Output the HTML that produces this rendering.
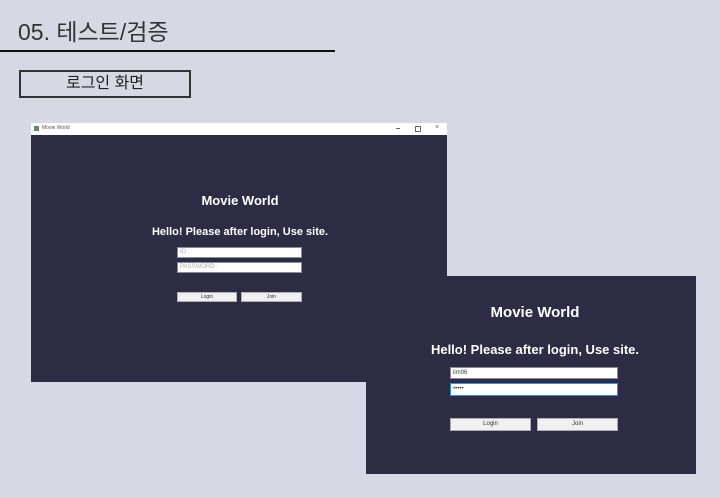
<!DOCTYPE html>
<html><head><meta charset="utf-8"><style>
body{margin:0;width:720px;height:498px;background:#d6d8e3;position:relative;overflow:hidden;font-family:"Liberation Sans","Noto Sans CJK KR",sans-serif}
.a{position:absolute}
.dark{background:#2e2b45}
.w{color:#fff;font-weight:bold;text-align:center;white-space:nowrap}
.in{background:#fff;border:1px solid #8a8a9a;box-sizing:border-box;font-size:6px;color:#aaa;padding-left:2px;line-height:9px}
.bt{background:#f0f0f0;border:1px solid #adadad;box-sizing:border-box;text-align:center;color:#333}
</style></head><body>
<div class="a" style="left:18px;top:13px;font-size:23px;color:#333">05. 테스트/검증</div>
<div class="a" style="left:0;top:50px;width:335px;height:2px;background:#111"></div>
<div class="a" style="left:19px;top:70px;width:172px;height:28px;border:2px solid #333;box-sizing:border-box;text-align:center;font-size:16px;line-height:24px;color:#222">로그인 화면</div>

<div class="a" style="left:31px;top:123px;width:416px;height:12px;background:#fff"></div>
<div class="a" style="left:34px;top:126px;width:5px;height:5px;background:#5a8a6a"></div>
<div class="a" style="left:42px;top:125px;font-size:5px;color:#555">Movie World</div>
<div class="a" style="left:396px;top:128px;width:4px;height:1px;background:#666"></div>
<div class="a" style="left:415px;top:126px;width:4px;height:4px;border:1px solid #666"></div>
<div class="a" style="left:435px;top:124px;font-size:7px;color:#666;line-height:8px">×</div>
<div class="a dark" style="left:31px;top:135px;width:416px;height:247px"></div>
<div class="a w" style="left:140px;top:193px;width:200px;font-size:13px">Movie World</div>
<div class="a w" style="left:130px;top:226px;width:220px;font-size:11px">Hello! Please after login, Use site.</div>
<div class="a in" style="left:177px;top:247px;width:125px;height:11px">ID :</div>
<div class="a in" style="left:177px;top:262px;width:125px;height:11px">PASSWORD :</div>
<div class="a bt" style="left:177px;top:292px;width:60px;height:10px;font-size:5px;line-height:8px">Login</div>
<div class="a bt" style="left:241px;top:292px;width:61px;height:10px;font-size:5px;line-height:8px">Join</div>

<div class="a dark" style="left:366px;top:276px;width:330px;height:198px"></div>
<div class="a w" style="left:400px;top:304px;width:270px;font-size:15px">Movie World</div>
<div class="a w" style="left:390px;top:342px;width:290px;font-size:13px">Hello! Please after login, Use site.</div>
<div class="a in" style="left:450px;top:367px;width:168px;height:12px;color:#444;line-height:10px">lim96</div>
<div class="a in" style="left:450px;top:383px;width:168px;height:13px;border-color:#3a8fd8;color:#444;line-height:10px">•••••</div>
<div class="a bt" style="left:450px;top:418px;width:81px;height:13px;font-size:6px;line-height:11px">Login</div>
<div class="a bt" style="left:537px;top:418px;width:81px;height:13px;font-size:6px;line-height:11px">Join</div>
</body></html>
